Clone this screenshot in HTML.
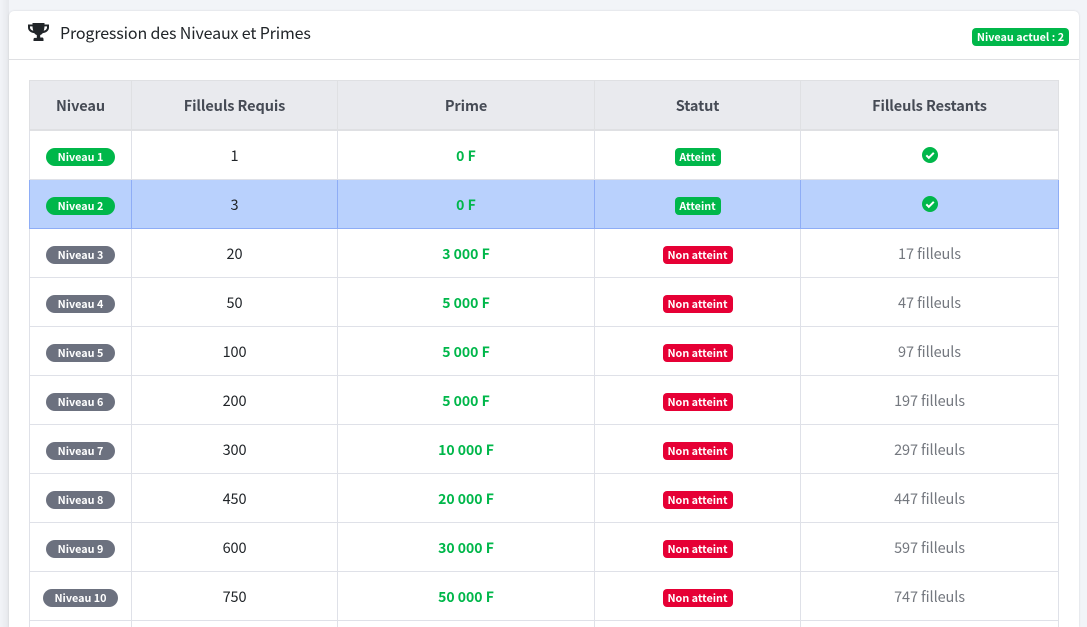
<!DOCTYPE html>
<html lang="fr"><head><meta charset="utf-8"><title>Progression</title>
<style>
*{box-sizing:border-box}
html,body{margin:0;padding:0;width:1087px;height:627px;overflow:hidden;background:#f2f4f8}
body{font-family:"Noto Sans CJK JP","Liberation Sans",sans-serif;color:#212529;position:relative}
.side{position:absolute;left:0;top:0;width:9px;height:627px;background:linear-gradient(90deg,#f2f4f8,#e6e8ec)}
.card{position:absolute;left:9px;top:11px;width:1070px;height:616px;background:#fff;border-radius:5px 5px 0 0;box-shadow:0 0 2px rgba(0,0,0,.12)}
.head{position:absolute;left:0;top:0;width:1070px;height:49px;border-bottom:1px solid #dfe0e3}
.trophy{position:absolute;left:19px;top:12px}
.title{position:absolute;left:51px;top:9px;font-size:16px;letter-spacing:-.14px;line-height:25px;color:#212529;white-space:nowrap}
.cur{position:absolute;left:963px;top:17px;width:97px;height:18px;background:#00b74a;color:#fff;border-radius:4px;font-size:10.8px;font-weight:700;line-height:18px;text-align:center;white-space:nowrap}
.wrap{position:absolute;left:0;top:0;width:1087px;height:627px;overflow:hidden}
table{position:absolute;left:29px;top:80px;width:1030px;table-layout:fixed;border-collapse:collapse;font-size:14.5px;letter-spacing:-.1px}
th,td{border:1px solid #dfe1e8;text-align:center;padding:0;white-space:nowrap}
th{height:49px;padding-top:1px;background:#e9eaee;color:#464b55;font-weight:700;font-size:14.5px;border-color:#dfe0e3;border-bottom-width:2px}
td{height:49px;line-height:20px;padding-top:1px;padding-bottom:0}
tr.first td{height:50px;padding-top:2px}
.p{display:inline-block;height:18px;line-height:18px;border-radius:9px;color:#fff;font-size:10.8px;letter-spacing:0;font-weight:700;width:69px;position:relative;top:0}
.w{width:75px}
.g{background:#00b74a}.s{background:#6c717f}
.r{color:#00b74a;font-weight:700;font-size:14px;letter-spacing:0}
.m{color:#74787f}
.bd{display:inline-block;height:18px;line-height:18px;border-radius:4px;color:#fff;font-size:10.8px;letter-spacing:0;font-weight:700;position:relative;top:0}
.ok{width:46px;background:#00b74a}
.no{width:70px;background:#e60035}
tr.cur-row td{background:#b9d1fd;border-color:#8eadf6}
svg.ic{display:block;margin:0 auto;position:relative;top:-1px}
</style></head><body>
<div class="side"></div>
<div class="card">
<div class="head">
<svg class="trophy" width="21" height="18" viewBox="0 0 21 18"><path fill="#212529" d="M4.500 0h12v1.500H21v3c0 3-2.600 5.200-6.200 5.600-.8 1-1.600 1.600-2.600 1.900v2.500h2.200c.6 0 1.100.7 1.100 1.600V18H5.500v-1.500c0-.9.500-1.600 1.100-1.600h2.200V12c-1-.3-1.800-.9-2.600-1.900C2.600 9.700 0 7.500 0 4.500v-3h4.500zM2 3.400v1.100c0 1.400 1.200 2.700 3.300 3.300-.4-1.200-.7-2.700-.8-4.400zm17 0h-2.500c-.1 1.700-.4 3.200-.8 4.400 2.100-.6 3.300-1.900 3.300-3.300z"/></svg>
<div class="title">Progression des Niveaux et Primes</div>
<div class="cur">Niveau actuel : 2</div>
</div>
</div>
<div class="wrap">
<table>
<colgroup><col style="width:102px"><col style="width:206px"><col style="width:257px"><col style="width:206px"><col style="width:258px"></colgroup>
<thead><tr><th>Niveau</th><th>Filleuls Requis</th><th>Prime</th><th>Statut</th><th>Filleuls Restants</th></tr></thead>
<tbody>
<tr class="first"><td><span class="p g">Niveau 1</span></td><td>1</td><td class="r">0 F</td><td><span class="bd ok">Atteint</span></td><td><svg class="ic" width="16" height="16" viewBox="0 0 16 16"><circle cx="8" cy="8" r="8" fill="#00b74a"/><path d="M4.300 8.300l2.500 2.500 5-5" fill="none" stroke="#fff" stroke-width="2"/></svg></td></tr>
<tr class="cur-row"><td><span class="p g">Niveau 2</span></td><td>3</td><td class="r">0 F</td><td><span class="bd ok">Atteint</span></td><td><svg class="ic" width="16" height="16" viewBox="0 0 16 16"><circle cx="8" cy="8" r="8" fill="#00b74a"/><path d="M4.300 8.300l2.500 2.500 5-5" fill="none" stroke="#fff" stroke-width="2"/></svg></td></tr>
<tr><td><span class="p s">Niveau 3</span></td><td>20</td><td class="r">3 000 F</td><td><span class="bd no">Non atteint</span></td><td class="m">17 filleuls</td></tr>
<tr><td><span class="p s">Niveau 4</span></td><td>50</td><td class="r">5 000 F</td><td><span class="bd no">Non atteint</span></td><td class="m">47 filleuls</td></tr>
<tr><td><span class="p s">Niveau 5</span></td><td>100</td><td class="r">5 000 F</td><td><span class="bd no">Non atteint</span></td><td class="m">97 filleuls</td></tr>
<tr><td><span class="p s">Niveau 6</span></td><td>200</td><td class="r">5 000 F</td><td><span class="bd no">Non atteint</span></td><td class="m">197 filleuls</td></tr>
<tr><td><span class="p s">Niveau 7</span></td><td>300</td><td class="r">10 000 F</td><td><span class="bd no">Non atteint</span></td><td class="m">297 filleuls</td></tr>
<tr><td><span class="p s">Niveau 8</span></td><td>450</td><td class="r">20 000 F</td><td><span class="bd no">Non atteint</span></td><td class="m">447 filleuls</td></tr>
<tr><td><span class="p s">Niveau 9</span></td><td>600</td><td class="r">30 000 F</td><td><span class="bd no">Non atteint</span></td><td class="m">597 filleuls</td></tr>
<tr><td><span class="p s w">Niveau 10</span></td><td>750</td><td class="r">50 000 F</td><td><span class="bd no">Non atteint</span></td><td class="m">747 filleuls</td></tr>
<tr><td></td><td></td><td></td><td></td><td></td></tr>
</tbody></table>
</div>
</body></html>
